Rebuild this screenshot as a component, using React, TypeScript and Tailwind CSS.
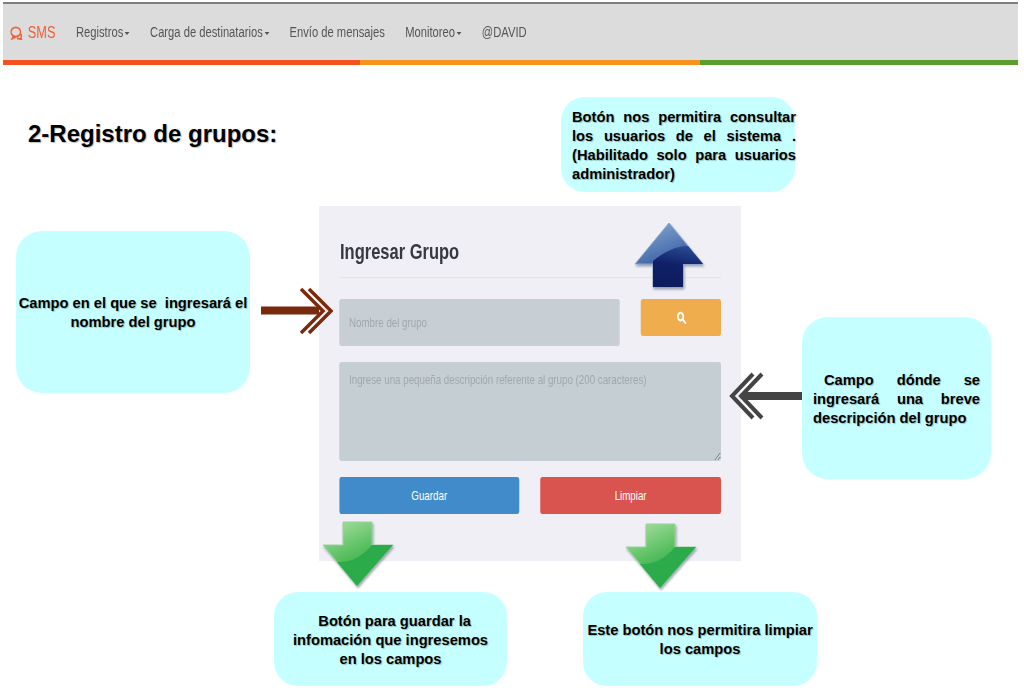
import React from 'react';

const navItems = [
  { label: 'Registros', caret: true },
  { label: 'Carga de destinatarios', caret: true },
  { label: 'Envío de mensajes', caret: false },
  { label: 'Monitoreo', caret: true },
  { label: '@DAVID', caret: false },
];

const Callout: React.FC<{ className: string; children: React.ReactNode }> = ({ className, children }) => (
  <div
    className={`absolute flex items-center bg-[#c6ffff] pt-[2px] text-[14.7px] font-bold leading-[19px] text-black [text-shadow:1px_1px_1px_rgba(0,0,0,0.25)] ${className}`}
  >
    <div className="w-full">{children}</div>
  </div>
);

const Navbar = () => (
  <nav className="mx-[3px] mt-[2px] w-[1015px]">
    <div className="h-[58px] border-t-2 border-[#7f7f7f] bg-[#dcdcdc]">
      <div className="flex h-[56px] w-[1269px] origin-left scale-x-[0.8] items-center gap-[25.5px] pl-[9px] pt-[1px] text-[14px] text-[#555555]">
        <a className="flex items-center gap-[6px] text-[16px] text-[#f0603a]">
          <svg viewBox="0 0 16 14" className="h-[14px] w-[16px]" fill="none" stroke="#f0603a" strokeWidth="1.8">
            <ellipse cx="7" cy="6" rx="6" ry="4.6" />
            <path d="M4 10l-1.500 2.600L7 10.800M12.500 7.500c1.600 1 2 3 .8 4.600l.9 1.600-3-1.100c-1 .2-2 .1-2.800-.2" />
          </svg>
          SMS
        </a>
        {navItems.map((item) => (
          <a key={item.label} className="flex items-center">
            {item.label}
            {item.caret && (
              <span className="ml-[2px] mt-[2px] h-0 w-0 border-x-[3px] border-t-[3px] border-x-transparent border-t-[#555555]" />
            )}
          </a>
        ))}
      </div>
    </div>
    <div className="flex h-[5px]">
      <div className="w-[357px] bg-[#f4511e]" />
      <div className="w-[340px] bg-[#f7941d]" />
      <div className="flex-1 bg-[#5a9e2f]" />
    </div>
  </nav>
);

const GroupForm = () => (
  <div className="ml-[319px] mt-[57px] h-[355px] w-[422px] bg-[#efeff5]">
    <div className="w-[563px] origin-left scale-x-75 pl-[27px] pr-[27px] pt-[32px]">
      <h2 className="border-b border-[#e3e3ea] pb-[11px] pl-[1px] text-[22px] font-bold leading-[28px] text-[#333a40]">
        Ingresar Grupo
      </h2>
      <div className="mt-[21px] flex items-start gap-[28px]">
        <input
          placeholder="Nombre del grupo"
          className="h-[47px] w-[374px] rounded-[3px] bg-[#c8cfd4] px-[13px] text-[13px] placeholder:text-[#a0a8ad]"
        />
        <button className="flex h-[37px] w-[107px] items-center justify-center rounded-[3px] bg-[#f0ad4e]">
          <svg viewBox="0 0 14 14" className="h-[13px] w-[16px]" fill="none" stroke="#ffffff" strokeWidth="2.400">
            <circle cx="6" cy="6" r="4" />
            <path d="M9 9l4 4" strokeLinecap="round" />
          </svg>
        </button>
      </div>
      <textarea
        placeholder="Ingrese una pequeña descripción referente al grupo (200 caracteres)"
        className="mt-[16px] block h-[99px] w-full rounded-[3px] bg-[#c5ced3] px-[13px] py-[8px] text-[13px] placeholder:text-[#a0a8ad]"
      />
      <div className="mt-[16px] flex gap-[28px]">
        <button className="h-[37px] w-[240px] rounded-[3px] bg-[#428bca] text-[13px] text-white">Guardar</button>
        <button className="h-[37px] w-[241px] rounded-[3px] bg-[#d9534f] text-[13px] text-white">Limpiar</button>
      </div>
    </div>
  </div>
);

const GreenArrow: React.FC<{ id: string; className: string }> = ({ id, className }) => (
  <svg viewBox="0 0 72 68" className={`absolute h-[68px] w-[72px] drop-shadow-[1px_2px_1px_rgba(70,90,110,0.5)] ${className}`}>
    <defs>
      <linearGradient id={id} x1="0.2" y1="0" x2="0.6" y2="0.8">
        <stop offset="0" stopColor="#a4dc9c" />
        <stop offset="0.55" stopColor="#5cc163" />
        <stop offset="1" stopColor="#2aa845" />
      </linearGradient>
    </defs>
    <path d="M21 1h29v23h21L35 65 1 24h20z" fill={`url(#${id})`} stroke="#9ad59a" strokeWidth="1" />
    <path d="M50 24h21L35 65 15 41C28 42 40 36 50 24z" fill="#2bab4a" />
  </svg>
);

export default function App() {
  return (
    <div className="relative h-[694px] w-[1024px] overflow-hidden bg-white font-['Liberation_Sans',Arial,sans-serif]">
      <Navbar />
      <h1 className="ml-[28px] mt-[54px] text-[24px] font-bold leading-[30px] text-black [text-shadow:1px_1px_1px_rgba(0,0,0,0.25)]">
        2-Registro de grupos:
      </h1>
      <GroupForm />

      <Callout className="left-[561px] top-[97px] h-[95px] w-[234px] rounded-[24px] pl-[11px] text-justify">
        <div className="w-[224px]">
          Botón nos permitira consultar los usuarios de el sistema . (Habilitado solo para usuarios administrador)
        </div>
      </Callout>
      <Callout className="left-[16px] top-[231px] h-[162px] w-[234px] rounded-[26px] text-center">
        {'Campo en el que se\u00a0 ingresará el nombre del grupo'}
      </Callout>
      <Callout className="left-[802px] top-[317px] h-[162px] w-[189px] rounded-[26px] px-[11px] text-justify">
        <span className="block indent-[11px]">Campo dónde se ingresará una breve descripción del grupo</span>
      </Callout>
      <Callout className="left-[274px] top-[592px] h-[94px] w-[233px] rounded-[24px] text-center">
        {'\u00a0\u00a0Botón para guardar la'}
        <br />
        infomación que ingresemos
        <br />
        en los campos
      </Callout>
      <Callout className="left-[583px] top-[592px] h-[94px] w-[234px] rounded-[24px] text-center">
        Este botón nos permitira limpiar los campos
      </Callout>

      {/* blue arrow over the search button */}
      <svg viewBox="0 0 72 68" className="absolute left-[634px] top-[222px] h-[68px] w-[72px] drop-shadow-[1px_2px_1px_rgba(70,90,120,0.5)]">
        <defs>
          <linearGradient id="blueArrow" x1="0.2" y1="0" x2="0.6" y2="1">
            <stop offset="0" stopColor="#86a6d2" />
            <stop offset="0.5" stopColor="#4a70ad" />
            <stop offset="1" stopColor="#12266b" />
          </linearGradient>
          <linearGradient id="blueArrowDark" x1="0.7" y1="0" x2="0.5" y2="1">
            <stop offset="0" stopColor="#2b4c93" />
            <stop offset="0.5" stopColor="#0f2068" />
            <stop offset="1" stopColor="#0d1c5c" />
          </linearGradient>
        </defs>
        <path d="M35 1l34 41H49v23H19V42H1z" fill="url(#blueArrow)" stroke="#8aa5cc" strokeWidth="1" />
        <path d="M19 65V39C30 30 42 24 54 24l15 18H49v23z" fill="url(#blueArrowDark)" />
      </svg>

      <GreenArrow id="greenArrowA" className="left-[322px] top-[521px]" />
      <GreenArrow id="greenArrowB" className="left-[625px] top-[523px]" />

      {/* brown arrow pointing at the name field */}
      <svg viewBox="0 0 72 48" className="absolute left-[261px] top-[287px] h-[48px] w-[72px]" fill="none" stroke="#7a2a0c">
        <path d="M0 23.500h58" strokeWidth="8" />
        <path d="M40 2l22 22-22 22" strokeWidth="3.500" />
        <path d="M48 2l22 22-22 22" strokeWidth="3.500" />
      </svg>

      {/* grey arrow pointing at the description field */}
      <svg viewBox="0 0 73 48" className="absolute left-[729px] top-[372px] h-[48px] w-[73px]" fill="none" stroke="#444444">
        <path d="M73 24H15" strokeWidth="8" />
        <path d="M24 2L3 24l21 22" strokeWidth="4" />
        <path d="M33 2L12 24l21 22" strokeWidth="4" />
      </svg>
    </div>
  );
}
